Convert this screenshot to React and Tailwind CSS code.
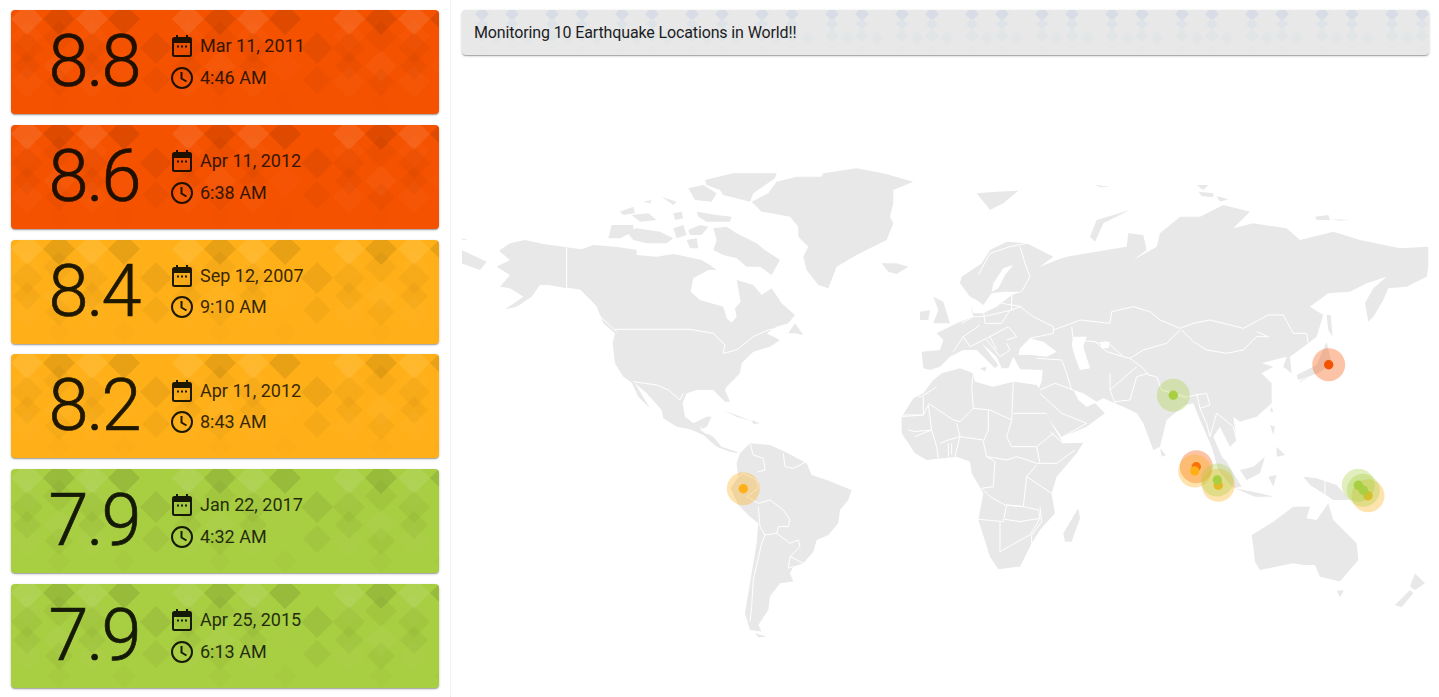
const CARDS = [
  { mag: '8.8', date: 'Mar 11, 2011', time: '4:46 AM', bg: 'bg-[#f55200]', text: 'text-[#1f1000]' },
  { mag: '8.6', date: 'Apr 11, 2012', time: '6:38 AM', bg: 'bg-[#f55200]', text: 'text-[#1f1000]' },
  { mag: '8.4', date: 'Sep 12, 2007', time: '9:10 AM', bg: 'bg-[#ffb018]', text: 'text-[#1f1800]' },
  { mag: '8.2', date: 'Apr 11, 2012', time: '8:43 AM', bg: 'bg-[#ffb018]', text: 'text-[#1f1800]' },
  { mag: '7.9', date: 'Jan 22, 2017', time: '4:32 AM', bg: 'bg-[#a8ce42]', text: 'text-[#151a08]' },
  { mag: '7.9', date: 'Apr 25, 2015', time: '6:13 AM', bg: 'bg-[#a8ce42]', text: 'text-[#151a08]' },
];

// x, y, half diagonal, fill: one 161px wide tile of the card background
const L = 'rgba(255,255,255,';
const D = 'rgba(0,0,0,';
const TILE = [
  [16, 9, 16, L + '.09)'],
  [48, 9, 16, D + '.09)'],
  [81, 9, 16, L + '.09)'],
  [113, 9, 16, D + '.09)'],
  [16, 26, 16, L + '.02)'],
  [48, 27, 16, D + '.03)'],
  [81, 26, 16, L + '.02)'],
  [145, 38, 16, D + '.06)'],
  [16, 38, 16, D + '.03)'],
  [81, 38, 16, D + '.03)'],
  [16, 56, 14, D + '.035)'],
  [81, 56, 14, D + '.035)'],
  [48, 56, 16, L + '.035)'],
  [113, 56, 16, L + '.015)'],
  [16, 72, 16, L + '.025)'],
  [81, 72, 16, L + '.025)'],
  [48, 72, 14, D + '.03)'],
  [145, 70, 14, D + '.035)'],
  [48, 92, 12, D + '.012)'],
  [113, 92, 12, D + '.012)'],
];

function Diamond({ x, y, r, fill }) {
  return <polygon points={`${x},${y - r} ${x + r},${y} ${x},${y + r} ${x - r},${y}`} fill={fill} />;
}

function CardPattern() {
  return (
    <svg className="absolute inset-0 h-full w-full" viewBox="0 0 428 104" preserveAspectRatio="none">
      {[0, 161, 322].map((dx) => (
        <g key={dx} transform={`translate(${dx} 0)`}>
          {TILE.map(([x, y, r, fill], i) => (
            <Diamond key={i} x={x} y={y} r={r} fill={fill} />
          ))}
        </g>
      ))}
    </svg>
  );
}

function HeaderPattern() {
  const cols = [];
  for (let x = 20; x < 967; x += 70) cols.push(x, x + 30);
  return (
    <svg className="absolute inset-0 h-full w-full" viewBox="0 0 967 45" preserveAspectRatio="none">
      {cols.map((x) => (
        <g key={x}>
          <Diamond x={x} y={4} r={7} fill="#d7dce6" />
          <Diamond x={x} y={14} r={6} fill="#dde3e6" />
          <polygon points={`${x - 7},${26} ${x},${19} ${x + 7},${26} ${x},${32}`} fill="#e1e5e6" />
          <Diamond x={x + 15} y={28} r={7} fill="#e3e6e7" />
          <Diamond x={x} y={39} r={5} fill="#e6e7e8" />
        </g>
      ))}
    </svg>
  );
}

function CalendarIcon() {
  return (
    <svg width="24" height="24" viewBox="0 0 24 24" className="shrink-0">
      <path
        fill="currentColor"
        d="M6 1h2v2h8V1h2v2h1.5A2.5 2.5 0 0 1 22 5.500v15a2.500 2.500 0 0 1-2.500 2.500h-15A2.500 2.500 0 0 1 2 20.500v-15A2.500 2.500 0 0 1 4.500 3H6V1zM4 9v11.500c0 .3.2.5.5.5h15c.3 0 .5-.2.5-.5V9H4z"
      />
      <rect x="7" y="11.500" width="2" height="2" fill="currentColor" />
      <rect x="11" y="11.500" width="2" height="2" fill="currentColor" />
      <rect x="15" y="11.500" width="2" height="2" fill="currentColor" />
    </svg>
  );
}

function ClockIcon() {
  return (
    <svg width="24" height="24" viewBox="0 0 24 24" className="shrink-0" fill="none" stroke="currentColor" strokeWidth="2">
      <circle cx="12" cy="12" r="10" />
      <path d="M11.500 6v6.500l5 3" />
    </svg>
  );
}

function QuakeCard({ card }) {
  return (
    <div className={`relative h-[104px] overflow-hidden rounded shadow-[0_1px_3px_rgba(0,0,0,0.2),0_1px_1px_rgba(0,0,0,0.14),0_2px_1px_-1px_rgba(0,0,0,0.12)] ${card.bg} ${card.text}`}>
      <CardPattern />
      <div className="relative flex h-full items-center">
        <div className="w-[166px] text-center text-[72px] leading-none font-light tracking-[-2px] [-webkit-text-stroke:0.7px_currentColor]">{card.mag}</div>
        <div className="ml-[-7px] flex flex-col gap-[7.500px] text-[18px] leading-[24px]">
          <div className="flex items-center gap-[6px]">
            <CalendarIcon />
            <span className="opacity-90">{card.date}</span>
          </div>
          <div className="flex items-center gap-[6px]">
            <ClockIcon />
            <span className="opacity-90">{card.time}</span>
          </div>
        </div>
      </div>
    </div>
  );
}

// traced by hand, in 3x coordinates; west group starts at page (460,160), east group at (940,160)
const LAND_WEST = [
  '120,270 150,250 195,240 250,252 320,262 365,268 400,255 440,258 480,262 530,270 530,285 590,290 640,282 680,290 725,300 750,315 770,330 745,330 700,355 692,395 720,420 790,440 800,475 815,488 830,470 825,445 842,425 830,360 880,375 905,405 935,385 965,430 1005,465 985,490 950,500 920,520 960,540 930,560 880,575 845,610 840,640 800,680 795,690 810,725 795,725 760,690 710,690 680,700 668,730 675,770 700,790 740,770 755,770 740,800 720,810 760,830 785,860 830,875 835,880 810,875 770,860 730,825 690,808 650,800 610,775 605,750 560,700 525,670 570,745 535,710 515,668 490,650 465,610 458,550 465,520 430,490 410,440 360,390 320,385 265,375 240,375 215,410 170,440 135,448 190,410 150,385 120,380 150,345 110,320 150,300 120,275',
  '445,235 455,195 520,195 520,215 480,235',
  '480,155 520,140 525,160 490,165',
  '515,165 565,160 590,180 540,185',
  '500,215 530,205 600,215 640,235 620,250 560,250 520,240',
  '550,125 575,120 570,130',
  '605,110 650,125 640,135',
  '640,160 665,155 670,175 645,180',
  '640,205 670,195 680,225 650,235',
  '685,210 720,195 745,200 725,225 690,225',
  '680,240 710,235 715,265 690,265',
  '735,60 820,40 950,40 945,55 880,100 870,125 790,105 780,90 740,75',
  '685,85 730,75 770,100 755,125 705,120',
  '710,155 770,165 815,170 810,185 740,185 715,170',
  '760,205 800,200 830,220 890,250 915,270 960,300 935,345 900,320 860,320 830,295 790,285 760,270 770,240',
  '1090,40 1190,25 1270,40 1360,65 1300,90 1300,130 1290,170 1300,190 1280,240 1230,265 1190,285 1130,320 1105,385 1075,375 1040,330 1030,290 1045,260 1015,230 1015,200 990,170 935,160 905,155 875,125 925,100 950,65 1010,50 1085,50',
  '1265,310 1310,310 1345,320 1310,342 1285,335',
  '985,520 1005,490 1030,525 1005,520',
  '5,270 80,305 60,330 5,310',
  '5,235 25,238 5,240',
  '790,750 880,785 830,770',
  '875,780 900,790 880,792',
  '840,880 870,850 930,855 975,875 1040,910 1055,945 1100,960 1175,990 1165,1020 1140,1050 1135,1090 1105,1125 1070,1140 1060,1175 1030,1210 1000,1220 990,1240 1000,1265 960,1270 930,1310 925,1350 895,1395 905,1415 870,1410 855,1360 870,1270 890,1150 895,1090 870,1070 835,1035 812,985 835,950 830,910',
  '885,1420 920,1430 895,1432',
];

const BORDERS_WEST = [
  '320,262 320,385 360,390 405,435 410,460 470,515',
  '465,508 690,508 760,520 795,555 790,580 830,570 880,530 925,510 955,505',
  '520,665 590,675 625,690 660,720 670,700',
  '720,800 735,820 760,820 785,850',
  '870,850 880,885 910,895 915,930 895,935',
  '970,880 975,920 1000,925 1040,905',
  '820,960 850,940 890,960 895,985 860,1010 895,1030',
  '895,1030 930,1020 970,1050 990,1080 985,1100 955,1100 950,1120 990,1150 1015,1140 1020,1160 990,1190 1030,1210',
  '895,1040 900,1100 915,1125 905,1150 880,1260 875,1340 870,1385',
  '915,1125 950,1120',
  '990,1190 985,1225 1000,1220',
];

const LAND_EAST = [
  // Africa
  '5,640 60,625 100,640 105,665 160,680 220,665 290,675 300,690 320,760 340,800 370,850 430,848 410,880 350,950 335,1000 345,1060 300,1110 275,1150 240,1220 175,1228 150,1190 115,1080 130,1000 95,940 90,905 50,890 -40,900 -75,880 -115,820 -115,770 -80,715 -50,700 -20,660',
  // Eurasia
  '-50,625 -55,575 0,570 10,540 -10,520 50,490 100,470 90,430 100,460 130,460 170,440 215,405 245,395 190,395 155,400 130,435 110,420 90,410 60,370 65,350 125,310 150,270 200,245 260,250 340,290 300,320 350,300 380,290 500,270 560,260 565,220 610,225 620,270 580,300 650,260 660,220 720,170 780,170 850,135 930,155 880,205 940,190 1040,205 1080,240 1180,215 1260,240 1380,265 1465,260 1465,320 1460,350 1400,380 1345,385 1330,420 1300,470 1285,485 1275,430 1300,385 1340,350 1280,370 1230,395 1165,400 1110,440 1150,465 1130,530 1105,550 1050,590 1055,640 1030,620 1040,590 965,610 1000,620 965,640 995,670 995,730 950,770 900,785 880,770 890,840 870,860 840,800 820,830 850,900 815,860 780,780 760,730 735,735 680,780 660,860 640,870 610,790 590,760 560,745 525,730 490,715 470,725 430,700 400,690 415,720 440,740 465,730 495,760 440,800 365,832 330,780 290,700 305,665 308,630 240,628 220,590 205,625 185,625 170,590 125,550 175,615 165,625 110,570 70,570 30,590 0,620 -30,630',
  // UK and Ireland
  '-20,410 10,425 30,490 -20,490 -5,450',
  '-60,455 -30,450 -35,480 -60,480',
  // Islands
  '110,100 170,95 235,92 190,130 150,150',
  '465,75 510,80 480,82',
  '770,75 805,75 790,90',
  '775,95 820,100 820,112 785,108',
  '830,108 865,118 840,125',
  '450,230 470,180 570,150 490,190 465,245',
  '1125,170 1165,165 1170,180 1130,180',
  '1175,178 1230,180 1200,182',
  '1160,465 1172,465 1178,530 1165,510',
  '1160,545 1175,610 1135,640 1075,660 1070,645 1130,615',
  '1075,670 1115,645 1085,660',
  '660,865 678,885 665,890',
  '815,860 860,905 905,980 880,985 835,930',
  '885,985 960,1000 1000,1010 945,1010',
  '900,930 940,920 975,890 960,940 920,960',
  '985,950 1010,945 1000,980',
  '990,795 1005,800 1000,825',
  '1010,860 1035,885 1010,890',
  '995,740 1000,755 990,755',
  '1090,950 1130,955 1190,975 1230,1020 1180,1020 1150,1000 1110,975',
  '935,1125 1000,1085 1060,1040 1110,1040 1100,1075 1130,1080 1165,1030 1180,1080 1250,1150 1255,1200 1200,1265 1140,1250 1125,1215 1090,1215 1060,1210 960,1230 945,1205 940,1160',
  '1190,1292 1212,1292 1200,1312',
  '1425,1240 1455,1270 1425,1290 1410,1280',
  '1365,1335 1410,1290 1420,1300 1385,1342',
  '370,1120 415,1045 420,1075 395,1145 375,1145',
  '120,625 140,620 135,635',
];

// seas that sit inside the land shape
const WATER_EAST = [
  '220,315 190,325 160,370 155,395 175,385 195,345',
  '240,565 270,535 310,545 350,575 320,590 270,585 235,585',
  '400,530 440,530 430,560 450,625 420,630 405,590 395,555',
  '480,548 510,545 505,565 485,565',
];

const BORDERS_EAST = [
  '-65,710 -55,710 -10,680',
  '-50,710 -50,765 -115,770',
  '-115,765 -50,765 -35,735 -25,810 -75,815 -95,810',
  '-35,730 40,780 60,785 100,745',
  '100,640 95,680 100,745 150,750 215,780 220,665',
  '220,760 320,760',
  '215,780 200,830 215,860 290,860 340,820',
  '145,750 145,810 130,845 140,890 200,900 230,890 290,910 350,910 405,870',
  '290,860 300,910',
  '330,815 370,850',
  '50,790 60,830 130,840',
  '140,890 165,905 160,980 125,985 150,1010 195,1035 250,1040 260,950 290,915',
  '260,950 335,1000 345,1030',
  '115,1078 190,1085 200,1035 250,1040 295,1050 300,1075 240,1085 195,1078',
  '180,1085 180,1175 215,1155 270,1125 300,1075',
  '300,1040 305,1085 275,1125 275,1150',
  '-75,830 -25,810 -10,860 -5,895',
  '0,850 25,840 60,830 45,890',
  '25,850 25,890',
  '35,850 35,885',
  '115,345 150,280 210,260 260,250',
  '240,260 255,310 270,350 245,395',
  '65,490 100,470 130,470 215,450 240,440 280,470 340,500 340,520 270,535',
  '130,450 135,490 185,490 210,450',
  '120,495 70,530 90,560 150,530 205,500 230,530 200,540',
  '140,540 180,590 210,570 200,550',
  '215,405 215,450',
  '185,430 245,440',
  '70,530 40,575',
  '150,530 170,570',
  '290,595 365,600 380,640 395,690',
  '300,690 345,670 400,690 440,740',
  '340,510 395,490 420,480 510,490 515,455 580,440 630,455 660,480 720,505',
  '720,505 760,490 810,480 910,505 985,465 1030,465 1060,520 1100,520 1105,550',
  '725,510 760,545 800,570 860,580 910,570 950,530 985,530 950,515',
  '720,510 680,550 610,570 570,595 610,625 625,645 650,650 665,690 740,710 800,700 810,735 780,745 770,700',
  '395,500 400,540 465,545 500,575 550,590 570,595',
  '470,550 500,545 550,590',
  '510,640 510,690 525,730',
  '510,690 590,620',
  '525,725 570,720 590,650 625,640',
  '665,690 740,715',
  '780,745 800,790 810,830 830,760 880,800 890,840',
  '365,832 440,790',
  '300,700 365,760 440,790',
  '1155,960 1155,1005',
];

const MARKERS = [
  [1328.7, 364.7, '#f55200'],
  [1173.3, 395.3, '#a8ce42'],
  [1196.3, 466.7, '#f55200'],
  [1194.7, 471, '#ffb018'],
  [1218.3, 485.3, '#ffb018'],
  [1217.3, 480, '#a8ce42'],
  [1368, 495.7, '#ffb018'],
  [1358.3, 485.3, '#a8ce42'],
  [1363.3, 490.3, '#a8ce42'],
  [743.3, 488.7, '#ffb018'],
];

function WorldMap() {
  return (
    <svg width="967" height="630" viewBox="462 60 967 630" className="block">
      <g transform="translate(460 160) scale(0.3333)">
        {LAND_WEST.map((p, i) => (
          <polygon key={i} points={p} fill="#e8e8e8" />
        ))}
        {BORDERS_WEST.map((p, i) => (
          <polyline key={i} points={p} fill="none" stroke="#fff" strokeWidth="3" />
        ))}
      </g>
      <g transform="translate(940 160) scale(0.3333)">
        {LAND_EAST.map((p, i) => (
          <polygon key={i} points={p} fill="#e8e8e8" />
        ))}
        {BORDERS_EAST.map((p, i) => (
          <polyline key={i} points={p} fill="none" stroke="#fff" strokeWidth="3" />
        ))}
        {WATER_EAST.map((p, i) => (
          <polygon key={i} points={p} fill="#fff" />
        ))}
      </g>
      {MARKERS.map(([x, y, c], i) => (
        <g key={i}>
          <circle cx={x} cy={y} r="16.500" fill={c} fillOpacity="0.35" />
          <circle cx={x} cy={y} r="4.700" fill={c} />
        </g>
      ))}
    </svg>
  );
}

export default function App() {
  return (
    <div className="flex h-[697px] w-full overflow-hidden bg-white font-['Roboto',sans-serif]">
      <div className="flex h-full w-[451px] shrink-0 flex-col gap-[10.75px] border-r border-dotted border-gray-200 pt-[10px] pr-[11px] pl-[11px]">
        {CARDS.map((c, i) => (
          <QuakeCard key={i} card={c} />
        ))}
      </div>
      <div className="flex flex-1 flex-col pt-[10px] pr-[10px] pl-[11px]">
        <div className="relative h-[45px] overflow-hidden rounded bg-[#e8e8e8] shadow-[0_1px_3px_rgba(0,0,0,0.2),0_1px_1px_rgba(0,0,0,0.14),0_2px_1px_-1px_rgba(0,0,0,0.12)]">
          <HeaderPattern />
          <div className="relative flex h-full items-center pl-3 text-[16px] tracking-[-0.13px] text-[#1d1d1f]">
            Monitoring 10 Earthquake Locations in World!!
          </div>
        </div>
        <div className="mt-[5px]">
          <WorldMap />
        </div>
      </div>
    </div>
  );
}
